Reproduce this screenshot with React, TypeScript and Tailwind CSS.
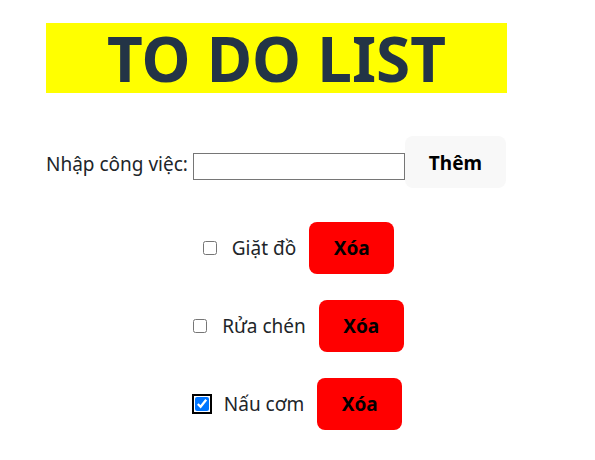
import React, { useState } from "react";

type Todo = { id: number; text: string; done: boolean };

const App = () => {
  const [todos, setTodos] = useState<Todo[]>([
    { id: 1, text: "Giặt đồ", done: false },
    { id: 2, text: "Rửa chén", done: false },
    { id: 3, text: "Nấu cơm", done: true },
  ]);
  const [value, setValue] = useState("");

  const addTodo = () => {
    if (!value.trim()) return;
    setTodos([...todos, { id: Date.now(), text: value, done: false }]);
    setValue("");
  };

  const toggle = (id: number) =>
    setTodos(todos.map((t) => (t.id === id ? { ...t, done: !t.done } : t)));

  const remove = (id: number) => setTodos(todos.filter((t) => t.id !== id));

  return (
    <div className="min-h-[460px] bg-white font-['Noto_Sans',sans-serif] text-[#212529]">
      <div className="ml-[46px] w-[461px] pt-[23px]">
        <h1 className="flex h-[70px] items-center justify-center bg-[#ffff00] text-[62px] font-bold text-[#233446]">
          TO DO LIST
        </h1>

        <div className="mt-[43px] flex items-center">
          <label htmlFor="todoInput" className="mt-[4px] text-[19px]">
            Nhập công việc:
          </label>
          <input
            id="todoInput"
            type="text"
            value={value}
            onChange={(e) => setValue(e.target.value)}
            className="ml-[5px] mt-[8px] h-[27px] w-[212px] border border-[#767676] px-1 text-[15px] outline-none"
          />
          <button
            onClick={addTodo}
            className="h-[52px] w-[101px] rounded-lg bg-[#f8f8f8] pt-[2px] text-[19px] font-bold text-black"
          >
            Thêm
          </button>
        </div>

        <ul className="mt-[34px] flex flex-col gap-[26px] pl-10">
          {todos.map((t) => (
            <li key={t.id} className="flex items-center justify-center">
              <input
                type="checkbox"
                checked={t.done}
                onChange={() => toggle(t.id)}
                className={
                  t.done
                    ? "m-[3px] ml-[4px] h-[14px] w-[14px] rounded-sm outline-2 outline-offset-1 outline-black"
                    : "m-[3px] ml-[4px] h-[14px] w-[14px]"
                }
              />
              <span className="ml-[12px] mr-[13px] text-[19px]">{t.text}</span>
              <button
                onClick={() => remove(t.id)}
                className="h-[52px] w-[85px] rounded-lg bg-[#ff0000] text-[19px] font-bold text-black"
              >
                Xóa
              </button>
            </li>
          ))}
        </ul>
      </div>
    </div>
  );
};

export default App;
